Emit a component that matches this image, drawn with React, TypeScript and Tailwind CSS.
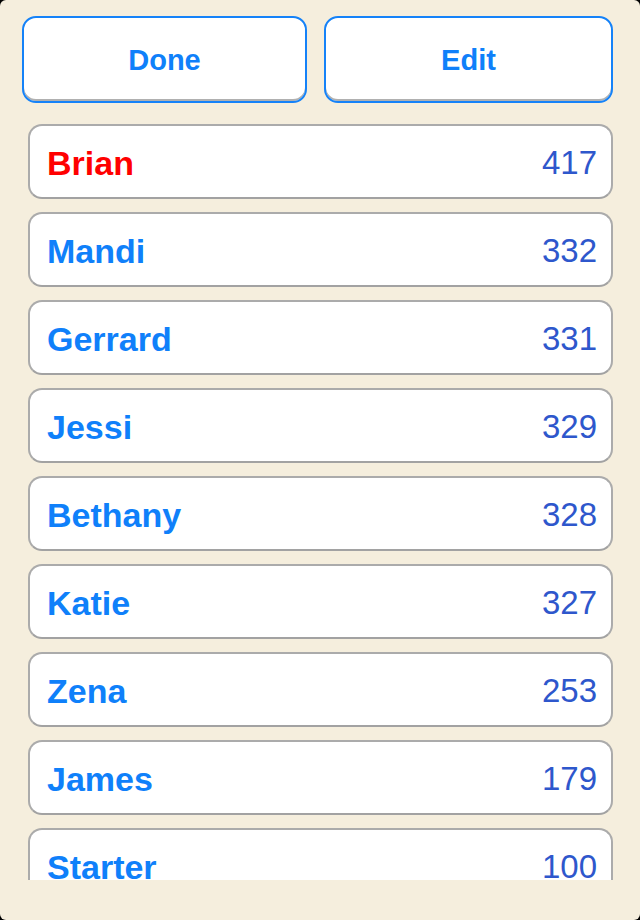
const players = [
  { name: "Brian", score: 417, leader: true },
  { name: "Mandi", score: 332 },
  { name: "Gerrard", score: 331 },
  { name: "Jessi", score: 329 },
  { name: "Bethany", score: 328 },
  { name: "Katie", score: 327 },
  { name: "Zena", score: 253 },
  { name: "James", score: 179 },
  { name: "Starter", score: 100 },
];

function ActionButton({ label }: { label: string }) {
  return (
    <button className="h-[87px] rounded-[14px] border-2 border-[#1582f8] bg-white pt-[2px] font-['Liberation_Sans',Arial,sans-serif] text-[29px] font-bold text-[#0f80fa] shadow-[inset_0_-2px_0_#b0b0b0]">
      {label}
    </button>
  );
}

export default function App() {
  return (
    <div className="h-[920px] w-[640px] bg-black font-['Liberation_Sans',Arial,sans-serif]">
      <div className="flex h-full flex-col rounded-[6px] bg-[#f5eedd]">
        <div className="grid grid-cols-[285px_289px] gap-[17px] pl-[22px] pt-[16px]">
          <ActionButton label="Done" />
          <ActionButton label="Edit" />
        </div>
        <div className="mt-[21px] flex h-[756px] flex-col gap-[13px] overflow-hidden pl-[28px] pr-[27px]">
          {players.map((p) => (
            <div
              key={p.name}
              className="flex h-[75px] shrink-0 items-center justify-between rounded-[14px] border-2 border-[#ababab] border-b-[#a2a2a2] bg-white pl-[17px] pr-[14px] pt-[3px]"
            >
              <span className={`text-[34px] font-bold ${p.leader ? "text-[#ff0000]" : "text-[#0f80fa]"}`}>
                {p.name}
              </span>
              <span className="text-[33px] text-[#2e57cc]">{p.score}</span>
            </div>
          ))}
        </div>
      </div>
    </div>
  );
}
